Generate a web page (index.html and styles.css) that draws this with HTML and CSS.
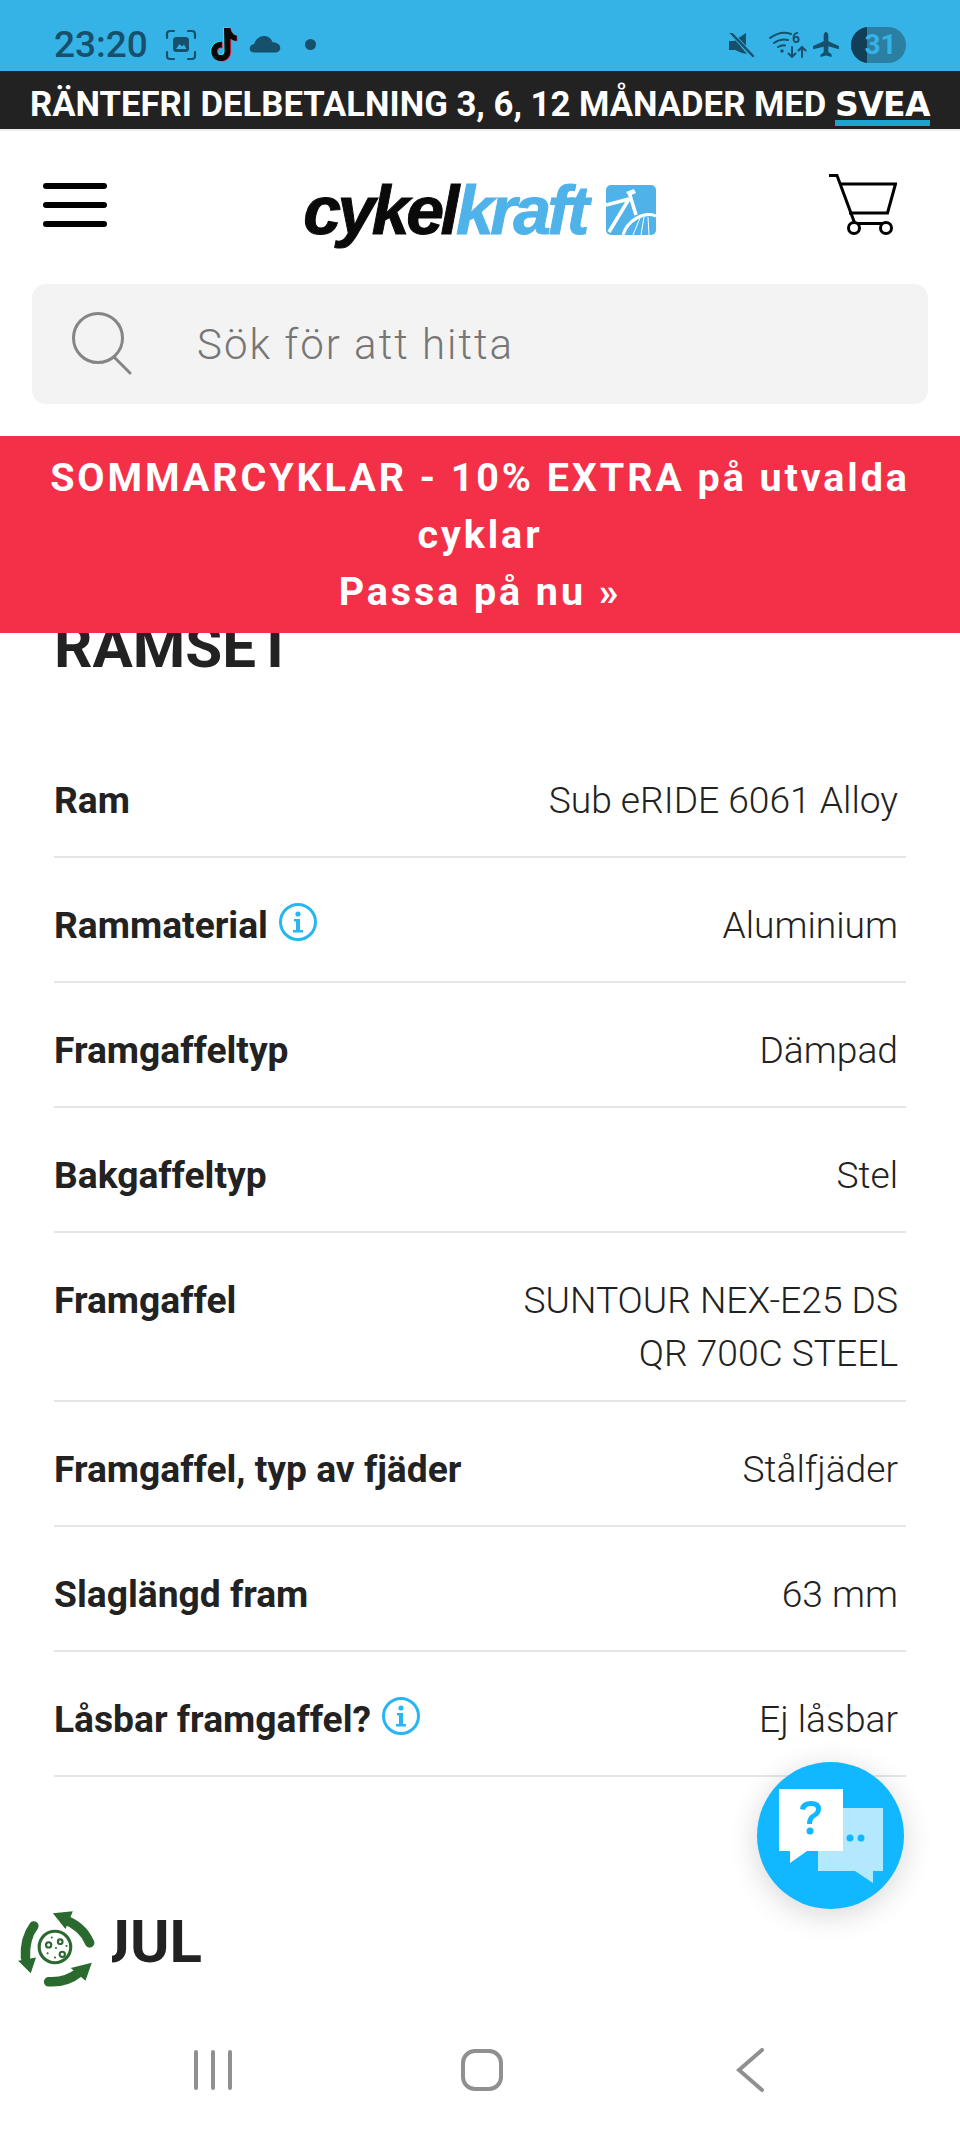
FILE: index.html
```html
<!DOCTYPE html>
<html lang="sv">
<head>
    <title>Cykelkraft - Ramset</title>
    <link rel="stylesheet" href="styles.css">
</head>
<body>
    <div class="statusbar">
        <div class="status-left">
            <span class="time">23:20</span>
            <svg class="ic-shot" width="32" height="32" viewBox="0 0 32 32" fill="none" stroke="#17506b" stroke-width="2.200" stroke-linecap="round"><path d="M2 9V5q0-3 3-3h4M23 2h4q3 0 3 3v4M30 23v4q0 3-3 3h-4M9 30H5q-3 0-3-3v-4"/><rect x="8" y="8" width="16" height="15" rx="3.500" fill="#17506b" stroke="none"/><path d="M11 20l3.500-5 2.500 2.500 2-2 2.500 4.500z" fill="#36b3e6" stroke="none"/></svg>
            <svg class="ic-tiktok" width="30" height="35" viewBox="4 1 26 33"><path d="M17 2h6c.4 4 2.800 6.500 6 7v5c-2.500 0-4.500-.8-6-2v12c0 5.500-4 9-9 9s-9-3.800-9-9c0-5.500 4.500-9.500 10-9v5.500c-2.500-.5-4.500 1-4.500 3.500 0 2 1.500 3.500 3.500 3.500s3.500-1.500 3.500-3.500z" fill="#fe2c55" transform="translate(.8 .5)"/><path d="M17 2h6c.4 4 2.800 6.500 6 7v5c-2.500 0-4.500-.8-6-2v12c0 5.500-4 9-9 9s-9-3.800-9-9c0-5.500 4.500-9.500 10-9v5.500c-2.500-.5-4.500 1-4.500 3.500 0 2 1.500 3.500 3.500 3.500s3.500-1.500 3.500-3.500z" fill="#25f4ee" transform="translate(-.8 -.5)"/><path d="M17 2h6c.4 4 2.800 6.500 6 7v5c-2.500 0-4.500-.8-6-2v12c0 5.500-4 9-9 9s-9-3.800-9-9c0-5.500 4.500-9.500 10-9v5.500c-2.500-.5-4.500 1-4.500 3.500 0 2 1.500 3.500 3.500 3.500s3.500-1.500 3.500-3.500z" fill="#0a0a0a"/></svg>
            <svg class="ic-cloud" width="32" height="18" viewBox="0 0 34 20"><path d="M5 19.500c-3 0-5-1.500-5-4.500 0-2.500 2-4.500 5-5 1.500-5.500 6-9 11-9 4.500 0 8 2.800 9.500 7 5 0 8.500 3 8.500 6.500 0 3-2.500 5-5.500 5z" fill="#17506b"/></svg>
            <span class="dot"></span>
        </div>
        <div class="status-right">
            <svg class="ic-mute" width="26" height="24" viewBox="0 0 26 24"><path d="M0 8h5L17 0v17.500L9 10l9 11-5-1-7-3H0z" fill="#17506b"/><path d="M3 1l21 22" stroke="#36b3e6" stroke-width="4"/><path d="M2 0l22 23" stroke="#17506b" stroke-width="2.500" stroke-linecap="round"/></svg>
            <svg class="ic-wifi" width="38" height="27" viewBox="0 0 38 27" fill="none" stroke="#17506b" stroke-width="2" stroke-linecap="round"><path d="M1 7q11-8 21-4M5 12q7-5 14-3M9 16q4-2.500 7-1.500"/><circle cx="13" cy="20" r="1.700" fill="#17506b" stroke="none"/><path d="M23 16v10M19.500 22.500l3.500 3.500 3.500-3.500M33 26V16M29.500 19.500l3.500-3.500 3.500 3.500"/><text x="23" y="11.500" class="wifi-six">6</text></svg>
            <svg class="ic-plane" width="26" height="25" viewBox="0 0 28 27"><path d="M14 0c1.500 0 2.500 2 2.500 4v6L28 15v3.500l-11.500-3v6l3.500 2.500V27l-6-1.500L8 27v-2.500l3.500-2.500v-6L0 18.500V15l11.500-5V4c0-2 1-4 2.500-4z" fill="#17506b"/></svg>
            <div class="battery"><span class="battery-level"></span><span class="battery-num">31</span></div>
        </div>
    </div>

    <div class="promo">
        <span>RÄNTEFRI DELBETALNING 3, 6, 12 MÅNADER MED</span>
        <span class="svea">SVEA</span>
    </div>

    <header class="site-header">
        <button class="menu-btn" aria-label="Meny"><i></i><i></i><i></i></button>
        <a class="logo">
            <span class="logo-cykel">cykel</span><span class="logo-kraft">kraft</span>
            <svg class="logo-mark" width="50" height="50" viewBox="0 0 50 50"><rect width="50" height="50" rx="5" fill="#4fb3ea"/><path d="M0 20l23-6M23 14L3 47M23 7l7 23" stroke="#fff" stroke-width="3.500" fill="none"/><path d="M20 7l8-3 2 4-7 3z" fill="#fff"/><path d="M17 50c4-14 20-24 33-19" stroke="#fff" stroke-width="3" fill="none"/><path d="M27 50l7-17M35 50l3-18M43 50l-1-18" stroke="#fff" stroke-width="1"/></svg>
        </a>
        <svg class="cart" width="68" height="62" viewBox="0 0 68 62" fill="none" stroke="#000" stroke-width="3"><path d="M0 1.500h8L26 50M25 49.500h36"/><path d="M11 10h55.500l-8 29H20"/><circle cx="25" cy="54" r="5.500" fill="#fff"/><circle cx="57" cy="54" r="5.500" fill="#fff"/></svg>
    </header>

    <div class="search">
        <svg width="64" height="64" viewBox="0 0 64 64" fill="none" stroke="#858585" stroke-width="3"><circle cx="27" cy="26" r="24.500"/><path d="M43 45l16 16" stroke-linecap="round"/></svg>
        <span class="search-text">Sök för att hitta</span>
    </div>

    <div class="campaign">SOMMARCYKLAR - 10% EXTRA på utvalda cyklar<br>Passa på nu »</div>

    <main class="specs">
        <h2 class="spec-title">RAMSET</h2>

        <div class="row"><b>Ram</b><span>Sub eRIDE 6061 Alloy</span></div>
        <div class="row">
            <b>Rammaterial
                <svg class="info" width="38" height="38" viewBox="0 0 38 38"><circle cx="19" cy="19" r="17.500" fill="none" stroke="#29b6f0" stroke-width="3"/><circle cx="19" cy="11" r="2.600" fill="#29b6f0"/><path d="M15 16h6v11h3v2.500H14V27h3v-8.500h-2z" fill="#29b6f0"/></svg>
            </b>
            <span>Aluminium</span>
        </div>
        <div class="row"><b>Framgaffeltyp</b><span>Dämpad</span></div>
        <div class="row"><b>Bakgaffeltyp</b><span>Stel</span></div>
        <div class="row"><b>Framgaffel</b><span class="wide">SUNTOUR NEX-E25 DS QR 700C STEEL</span></div>
        <div class="row"><b>Framgaffel, typ av fjäder</b><span>Stålfjäder</span></div>
        <div class="row"><b>Slaglängd fram</b><span>63 mm</span></div>
        <div class="row">
            <b>Låsbar framgaffel?
                <svg class="info" width="38" height="38" viewBox="0 0 38 38"><circle cx="19" cy="19" r="17.500" fill="none" stroke="#29b6f0" stroke-width="3"/><circle cx="19" cy="11" r="2.600" fill="#29b6f0"/><path d="M15 16h6v11h3v2.500H14V27h3v-8.500h-2z" fill="#29b6f0"/></svg>
            </b>
            <span>Ej låsbar</span>
        </div>

        <h2 class="next-title">HJUL</h2>
    </main>

    <div class="eco-badge">
        <svg width="80" height="80" viewBox="0 0 76 76">
            <g fill="none" stroke="#2a6a2e" stroke-width="9" stroke-linecap="round">
                <path d="M46 12q17 6 24 22" />
                <path d="M17 18q-9 12-8 30" />
                <path d="M31 71q17 1 29-9" />
            </g>
            <path d="M35 6l19-2-7 17zM2 51l17-3-5 15zM72 53l-6 17-14-12z" fill="#2a6a2e"/>
            <circle cx="37" cy="38" r="15" fill="#fff" stroke="#2a6a2e" stroke-width="3"/>
            <g fill="none" stroke="#2a6a2e" stroke-width="2"><circle cx="31" cy="36" r="2.500"/><circle cx="42" cy="33" r="2.200"/><circle cx="44" cy="45" r="2.500"/></g>
            <g fill="#2a6a2e"><circle cx="34" cy="29" r="1"/><circle cx="38" cy="39" r="1"/><circle cx="48" cy="37" r="1"/><circle cx="30" cy="44" r="1"/><circle cx="37" cy="48" r="1"/></g>
        </svg>
    </div>

    <button class="chat" aria-label="Chatt">
        <svg width="104" height="94" viewBox="0 0 104 94">
            <path d="M39 19h65v63h-10v12L76 82H39z" fill="#b3e8ff"/>
            <path d="M0 0h64v62H28L11 74V62H0z" fill="#fff"/>
            <path d="M21 20q1-8 11-8 10 0 10 8 0 5-5 8-4 2-4 7h-5q0-7 5-10 4-2 4-5 0-3-5-3-5 0-6 4z" fill="#12b8ff"/>
            <circle cx="31" cy="42" r="3.500" fill="#12b8ff"/>
            <circle cx="71" cy="49" r="3.500" fill="#12b8ff"/><circle cx="82" cy="49" r="3.500" fill="#12b8ff"/>
        </svg>
    </button>

    <nav class="navbar">
        <span class="nav-recent"><i></i><i></i><i></i></span>
        <span class="nav-home"></span>
        <svg width="30" height="44" viewBox="0 0 30 44" fill="none" stroke="#909090" stroke-width="4" stroke-linecap="round"><path d="M26 2L3 22l23 20"/></svg>
    </nav>
</body>
</html>
```

FILE: styles.css
```css
* { box-sizing: border-box; }
html, body { margin: 0; padding: 0; }
body { width: 960px; height: 2133px; overflow: hidden; position: relative; background: #fff; font-family: Roboto, Arial, sans-serif; color: #222; }

.statusbar { height: 71px; background: #36b3e6; display: flex; justify-content: space-between; align-items: center; padding: 18px 54px 0; color: #17506b; }
.status-left, .status-right { display: flex; align-items: center; }
.time { font-size: 37px; font-weight: 500; margin-right: 17px; }
.ic-shot { margin-right: 12px; }
.ic-tiktok { margin-right: 10px; }
.ic-cloud { margin-right: 24px; margin-top: -2px; }
.dot { width: 11px; height: 11px; border-radius: 50%; background: #17506b; }
.ic-mute { margin-right: 14px; }
.ic-wifi { margin-right: 6px; }
.ic-plane { margin-right: 12px; }
.wifi-six { font-size: 14px; font-weight: 700; fill: #17506b; stroke: none; }
.battery { position: relative; width: 55px; height: 36px; border-radius: 18px; background: #2a7fa3; overflow: hidden; }
.battery-level { display: block; width: 16px; height: 100%; background: #123f57; }
.battery-num { position: absolute; inset: 0; text-align: center; font-size: 28px; font-weight: 700; line-height: 36px; color: #36b3e6; padding-left: 4px; }

.promo { height: 58px; background: #222; color: #fff; display: flex; justify-content: space-between; align-items: center; padding: 8px 30px 0; font-size: 34.700px; font-weight: 700; white-space: nowrap; }
.svea { font-family: "DejaVu Sans", sans-serif; font-size: 33px; line-height: 30px; font-weight: 700; border-bottom: 6px solid #1aa6c8; letter-spacing: -.6px; margin-top: 8px; }

.site-header { height: 155px; border-top: 2px solid #eee; display: flex; align-items: center; justify-content: space-between; padding: 0 63px 0 43px; }
.menu-btn { width: 64px; border: 0; background: none; padding: 0; display: flex; flex-direction: column; gap: 13px; margin-top: -6px; }
.menu-btn i { display: block; height: 6px; border-radius: 3px; background: #000; }
.logo { display: flex; align-items: center; gap: 20px; margin-top: 4px; margin-left: 23px; font-family: "Liberation Sans", Arial, sans-serif; font-style: italic; font-weight: 700; font-size: 68px; letter-spacing: -3.500px; line-height: 68px; -webkit-text-stroke: 1px currentColor; }
.logo-cykel { color: #0a0a0a; }
.logo-kraft { color: #4fb3ea; margin-left: -20px; }
.cart { margin-top: -5px; }

.search { height: 120px; margin: 0 32px; background: #f3f3f3; border-radius: 14px; display: flex; align-items: center; padding-left: 39px; gap: 62px; }
.search svg { flex: none; }
.search-text { font-size: 42px; font-weight: 300; color: #767676; letter-spacing: 2px; }

.campaign { margin-top: 32px; height: 197px; background: #f33047; color: #fff; text-align: center; font-size: 39.500px; font-weight: 700; line-height: 57px; letter-spacing: 2.900px; padding: 13px 30px 0; }

.specs { overflow: hidden; height: 1500px; padding: 0 54px; }
.spec-title { margin: -19px 0 53px; font-size: 60px; line-height: 66px; font-weight: 700; color: #222; }
.row { display: flex; justify-content: space-between; align-items: flex-start; min-height: 125px; border-bottom: 2px solid #e6e6e6; padding: 41px 8px 0 0; font-size: 37.200px; line-height: 53px; }
.row b { font-weight: 700; color: #222; white-space: nowrap; }
.row span { font-weight: 300; color: #222; text-align: right; }
.row .wide { width: 400px; margin-bottom: 20px; }
.info { vertical-align: -3px; margin-left: 2px; }
.next-title { margin: 0; padding-top: 132px; font-size: 60px; line-height: 66px; font-weight: 700; color: #222; }

.eco-badge { position: absolute; left: 14px; top: 1905px; width: 98px; height: 85px; background: #fff; padding: 2px 0 0 2px; }
.chat { position: absolute; left: 757px; top: 1762px; width: 147px; height: 147px; border: 0; padding: 0; border-radius: 50%; background: #12b8ff; box-shadow: 0 6px 30px rgba(0,0,0,.16); display: flex; align-items: center; justify-content: center; }

.navbar { position: absolute; left: 0; right: 0; bottom: 0; height: 133px; background: #fff; display: flex; align-items: center; padding: 0 194px; justify-content: space-between; }
.nav-recent { display: flex; gap: 13px; margin-top: 7px; }
.nav-recent i { display: block; width: 4px; height: 40px; border-radius: 2px; background: #909090; }
.nav-home { width: 42px; height: 42px; border: 4px solid #909090; border-radius: 14px; margin-top: 7px; margin-left: -5px; }
.navbar svg { margin-top: 7px; }
```
